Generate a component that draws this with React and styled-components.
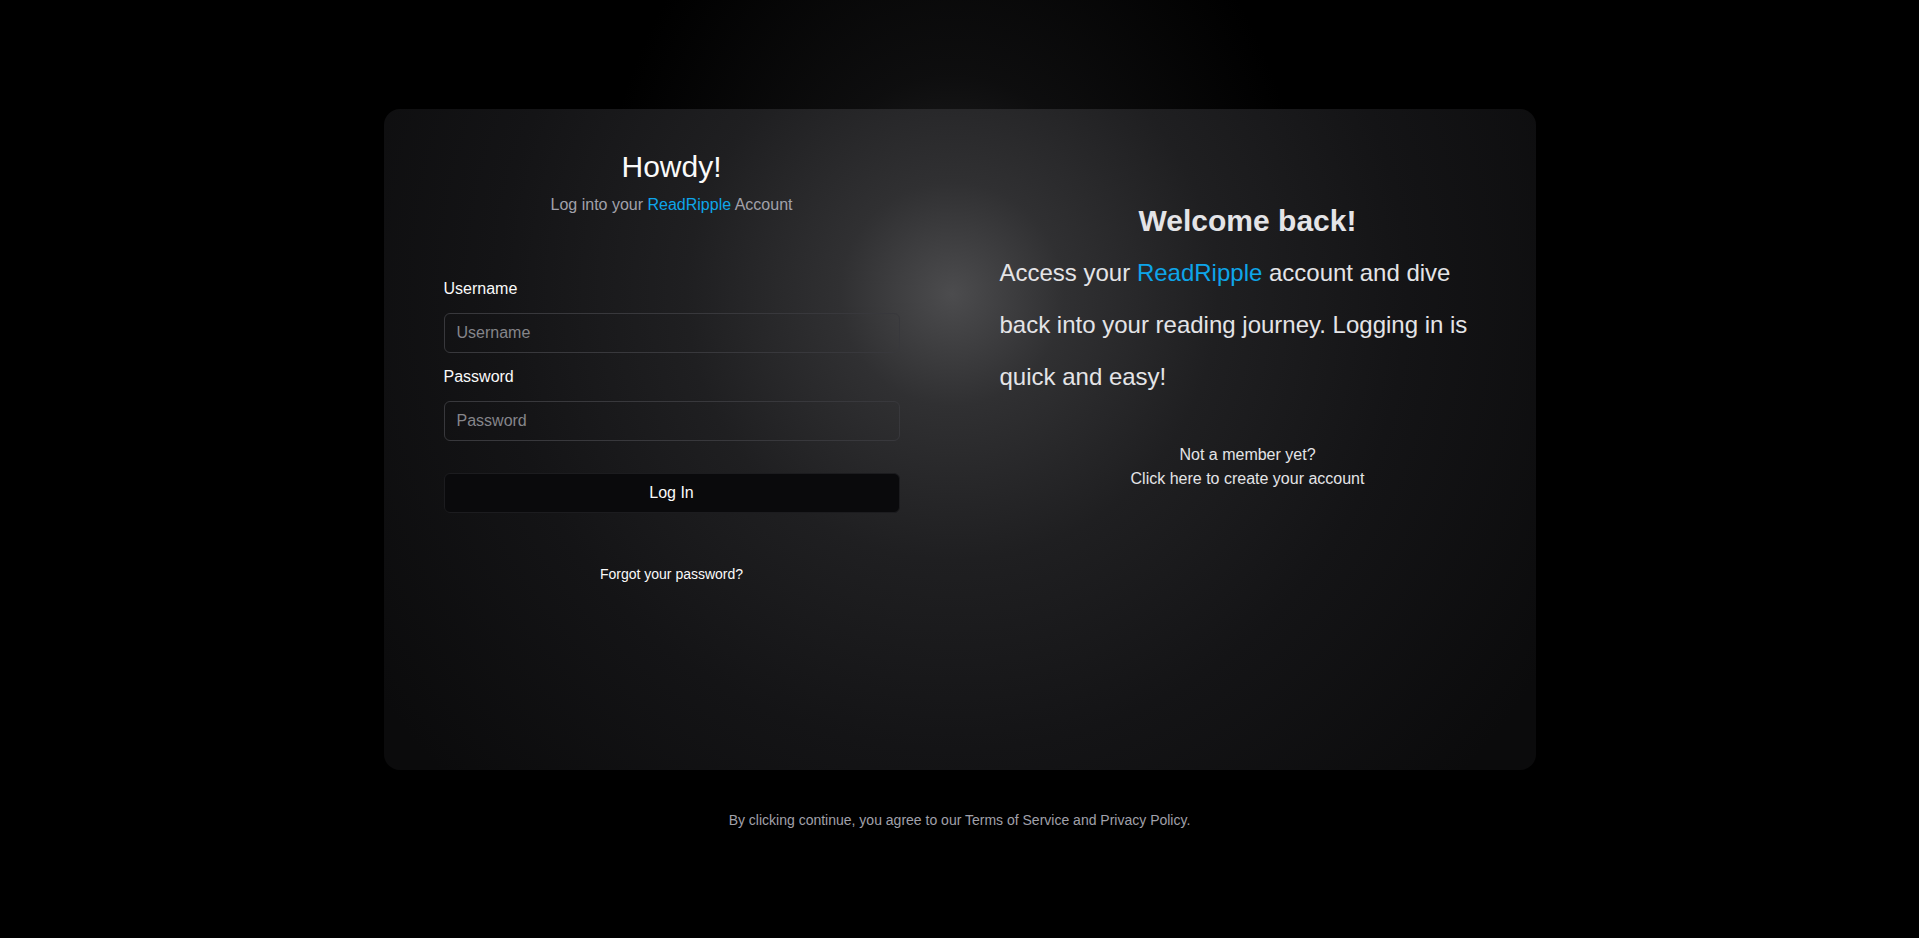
import React from "react";
import styled, { createGlobalStyle } from "styled-components";

const GlobalStyle = createGlobalStyle`
  html, body {
    margin: 0;
    padding: 0;
    background: #000;
  }
  body {
    font-family: "Liberation Sans", Arial, Helvetica, sans-serif;
    color: #fafafa;
  }
  * { box-sizing: border-box; }
`;

export default function App() {
  return (
    <>
      <GlobalStyle />
      <Page>
        <Card>
          <LeftCol>
            <Title>Howdy!</Title>
            <Subtitle>
              Log into your <Brand>ReadRipple</Brand> Account
            </Subtitle>
            <Form onSubmit={(e) => e.preventDefault()}>
              <Label htmlFor="username">Username</Label>
              <Input id="username" placeholder="Username" />
              <Label htmlFor="password" $spaced>Password</Label>
              <Input id="password" type="password" placeholder="Password" />
              <LoginButton type="submit">Log In</LoginButton>
            </Form>
            <Forgot href="#">Forgot your password?</Forgot>
          </LeftCol>
          <RightCol>
            <WelcomeTitle>Welcome back!</WelcomeTitle>
            <Lead>
              Access your <Brand>ReadRipple</Brand> account and dive back into
              your reading journey. Logging in is quick and easy!
            </Lead>
            <SignUp>
              Not a member yet?
              <br />
              <SignUpLink href="#">Click here to create your account</SignUpLink>
            </SignUp>
          </RightCol>
        </Card>
        <Terms>
          By clicking continue, you agree to our Terms of Service and Privacy Policy.
        </Terms>
      </Page>
    </>
  );
}

const Page = styled.main`
  min-height: 100vh;
  display: flex;
  flex-direction: column;
  align-items: center;
  justify-content: center;
  gap: 40px;
  padding: 20px 0;
  background:
    radial-gradient(ellipse 360px 480px at 952px 290px, rgba(72, 72, 74, 0.6) 0%, rgba(34, 34, 36, 0.4) 45%, rgba(0, 0, 0, 0) 100%),
    #000;
`;

const Card = styled.section`
  width: 1152px;
  height: 661px;
  border-radius: 16px;
  display: grid;
  grid-template-columns: 1fr 1fr;
  background:
    radial-gradient(circle 700px at 568px 185px, #4c4c4e 0%, #303032 16%, #1f1f21 38%, #141416 65%, #0b0b0c 100%);
  overflow: hidden;
`;

const LeftCol = styled.div`
  padding: 40px 60px 0;
  display: flex;
  flex-direction: column;
  align-items: stretch;
`;

const Title = styled.h1`
  margin: 0;
  font-size: 30px;
  line-height: 36px;
  font-weight: 400;
  text-align: center;
  color: #fafafa;
`;

const Subtitle = styled.p`
  margin: 8px 0 0;
  font-size: 16px;
  line-height: 24px;
  text-align: center;
  color: #a1a1aa;
`;

const Brand = styled.span`
  color: #0ea5e9;
`;

const Form = styled.form`
  margin-top: 60px;
  display: flex;
  flex-direction: column;
`;

const Label = styled.label`
  font-size: 16px;
  line-height: 24px;
  color: #fafafa;
  margin-top: ${(p) => (p.$spaced ? "12px" : "0")};
  margin-bottom: 12px;
`;

const Input = styled.input`
  height: 40px;
  width: 100%;
  padding: 0 12px;
  border: 1px solid #38383c;
  border-radius: 6px;
  background: transparent;
  font-family: inherit;
  font-size: 16px;
  color: #fafafa;
  outline: none;
  &::placeholder {
    color: #85858a;
  }
`;

const LoginButton = styled.button`
  margin-top: 32px;
  height: 40px;
  width: 100%;
  border: 1px solid #1c1c1f;
  border-radius: 6px;
  background: #0a0a0c;
  color: #fafafa;
  font-family: inherit;
  font-size: 16px;
  cursor: pointer;
`;

const Forgot = styled.a`
  margin-top: 51px;
  align-self: center;
  font-size: 14px;
  line-height: 20px;
  color: #fafafa;
  text-decoration: none;
`;

const RightCol = styled.div`
  padding: 94px 40px 0;
  display: flex;
  flex-direction: column;
`;

const WelcomeTitle = styled.h2`
  margin: 0;
  font-size: 30px;
  line-height: 36px;
  font-weight: 700;
  text-align: center;
  color: #e4e4e7;
`;

const Lead = styled.p`
  margin: 8px 0 0;
  font-size: 24px;
  line-height: 52px;
  color: #e4e4e7;
`;

const SignUp = styled.p`
  margin: 40px 0 0;
  font-size: 16px;
  line-height: 24px;
  text-align: center;
  color: #e4e4e7;
`;

const SignUpLink = styled.a`
  color: inherit;
  text-decoration: none;
`;

const Terms = styled.p`
  margin: 0;
  font-size: 14px;
  line-height: 20px;
  text-align: center;
  color: #a1a1aa;
`;
